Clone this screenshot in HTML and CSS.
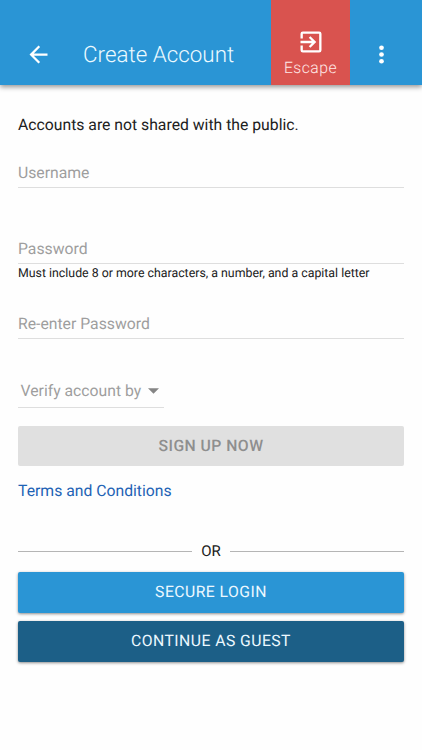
FILE: index.html
```html
<!DOCTYPE html>
<html lang="en">
<head>
<meta charset="utf-8">
<title>Create Account</title>
<link rel="stylesheet" href="styles.css">
</head>
<body>
<header class="bar">
  <svg class="back" viewBox="0 0 24 24"><path d="M20 11H7.83l5.59-5.59L12 4l-8 8 8 8 1.41-1.41L7.83 13H20z"/></svg>
  <h1 class="title">Create Account</h1>
  <div class="escape">
    <svg class="exit" viewBox="0 0 24 24"><path d="M10.09 15.59L11.5 17l5-5-5-5-1.41 1.41L12.67 11H3v2h9.67zM19 3H5a2 2 0 0 0-2 2v4h2V5h14v14H5v-4H3v4a2 2 0 0 0 2 2h14a2 2 0 0 0 2-2V5a2 2 0 0 0-2-2z"/></svg>
    <span class="escape-label">Escape</span>
  </div>
  <svg class="more" viewBox="0 0 24 24"><circle cx="12" cy="6" r="2.1"/><circle cx="12" cy="12" r="2.1"/><circle cx="12" cy="18" r="2.1"/></svg>
</header>
<main class="form">
  <p class="intro"><span>Accounts are not shared with the public.</span></p>
  <div class="field"><span>Username</span></div>
  <div class="field second"><span>Password</span></div>
  <p class="hint"><span>Must include 8 or more characters, a number, and a capital letter</span></p>
  <div class="field third"><span>Re-enter Password</span></div>
  <div class="select"><span>Verify account by</span><svg class="caret" viewBox="0 0 12 6"><path d="M0 0h12L6 6z"/></svg></div>
  <div class="button disabled"><span>SIGN UP NOW</span></div>
  <a class="terms">Terms and Conditions</a>
  <div class="or"><span>OR</span></div>
  <div class="button login"><span>SECURE LOGIN</span></div>
  <div class="button guest"><span>CONTINUE AS GUEST</span></div>
</main>
</body>
</html>
```
FILE: styles.css
```css
* { box-sizing: border-box; }
body { margin: 0; height: 750px; background: #fefefe; font-family: Roboto, sans-serif; font-size: 15.75px; color: #212121; overflow: hidden; text-rendering: geometricPrecision; }
h1, p { margin: 0; font-weight: 400; }
svg { display: block; fill: #fff; flex: none; }
span, a { white-space: nowrap; }
.bar { height: 85px; display: flex; background: #2a95d5; box-shadow: 0 2px 5px rgba(0,0,0,.42); }
.back { width: 27px; height: 27px; margin: 41px 0 0 25px; }
.title { width: 188px; margin: 40px 0 0 31px; font-size: 22.4px; line-height: 30px; font-weight: 300; color: #ecfaff; }
.escape { width: 79px; background: #d9534f; display: flex; flex-direction: column; align-items: center; padding-top: 28px; }
.exit { width: 28px; height: 28px; }
.escape-label { margin-top: 2px; font-size: 15.7px; line-height: 20px; font-weight: 300; color: #ffe9e7; letter-spacing: .5px; }
.more { width: 27px; height: 27px; margin: 41px 0 0 18px; }
.form { padding: 0 18px; display: flex; flex-direction: column; }
.intro { height: 20px; line-height: 20px; margin-top: 30px; }
.field { height: 30px; margin-top: 23px; padding-top: 5px; line-height: 20px; color: #9e9e9e; border-bottom: 1px solid #dedede; }
.second { margin-top: 46px; }
.hint { height: 16px; line-height: 16px; margin-top: 2px; font-size: 12.35px; }
.third { margin-top: 27px; }
.select { width: 146px; height: 29px; margin-top: 40px; padding: 2px 5px 0 2.5px; display: flex; justify-content: space-between; line-height: 20px; color: #9e9e9e; border-bottom: 1px solid #dedede; }
.caret { width: 11px; height: 6px; margin-top: 7px; fill: #858585; }
.button { height: 41px; display: flex; align-items: center; justify-content: center; border-radius: 2px; padding-bottom: 3px; letter-spacing: .45px; color: #ecf8ff; }
.disabled { height: 40px; padding-bottom: 2px; margin-top: 18px; background: #e0e0e0; color: #8e8e8e; font-weight: 500; }
.terms { align-self: flex-start; margin-top: 15px; line-height: 20px; color: #1e63b5; }
.or { display: flex; align-items: center; gap: 9px; height: 20px; margin-top: 40px; line-height: 20px; font-size: 15px; }
.or::before, .or::after { content: ""; flex: 1; height: 1px; background: #b5b5b5; }
.login { margin-top: 11px; background: #2a95d5; box-shadow: 0 1px 3px rgba(0,0,0,.45); }
.guest { margin-top: 8px; background: #1c5f87; box-shadow: 0 1px 3px rgba(0,0,0,.45); }
```
